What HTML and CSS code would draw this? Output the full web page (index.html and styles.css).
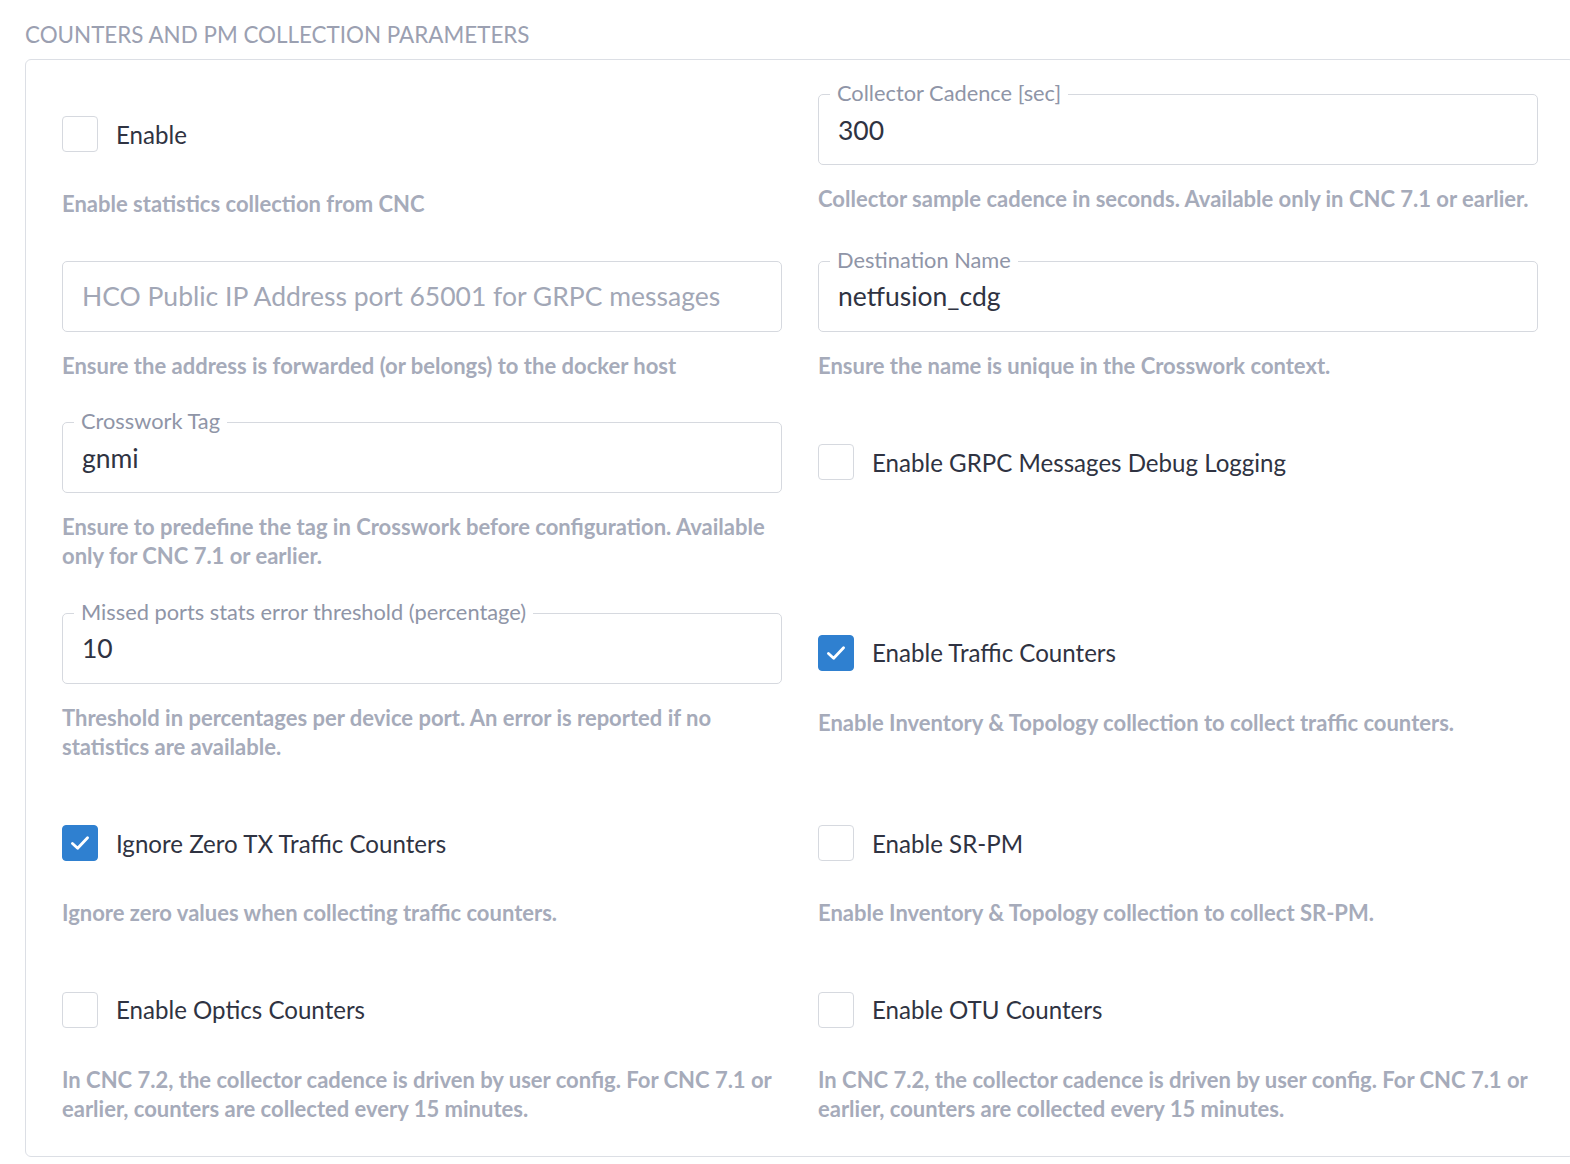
FILE: index.html
```html
<!DOCTYPE html>
<html lang="en">
<head>
  <meta charset="UTF-8" />
  <title>Counters and PM Collection Parameters</title>
  <link rel="stylesheet" href="styles.css">
</head>
<body>
  <h2 class="section-title">COUNTERS AND PM COLLECTION PARAMETERS</h2>

  <div class="panel">
    <div class="form-grid">

      <div class="field">
        <label class="check"><span class="box"></span><span>Enable</span></label>
        <p class="hint">Enable statistics collection from CNC</p>
      </div>
      <div class="field">
        <div class="outlined">
          <span class="float-label">Collector Cadence [sec]</span>
          <input type="text" value="300" />
        </div>
        <p class="hint">Collector sample cadence in seconds. Available only in CNC 7.1 or earlier.</p>
      </div>

      <div class="field">
        <div class="outlined">
          <input type="text" placeholder="HCO Public IP Address port 65001 for GRPC messages" />
        </div>
        <p class="hint">Ensure the address is forwarded (or belongs) to the docker host</p>
      </div>
      <div class="field">
        <div class="outlined">
          <span class="float-label">Destination Name</span>
          <input type="text" value="netfusion_cdg" />
        </div>
        <p class="hint">Ensure the name is unique in the Crosswork context.</p>
      </div>

      <div class="field">
        <div class="outlined">
          <span class="float-label">Crosswork Tag</span>
          <input type="text" value="gnmi" />
        </div>
        <p class="hint">Ensure to predefine the tag in Crosswork before configuration. Available only for CNC 7.1 or earlier.</p>
      </div>
      <div class="field">
        <label class="check"><span class="box"></span><span>Enable GRPC Messages Debug Logging</span></label>
      </div>

      <div class="field">
        <div class="outlined">
          <span class="float-label">Missed ports stats error threshold (percentage)</span>
          <input type="text" value="10" />
        </div>
        <p class="hint">Threshold in percentages per device port. An error is reported if no statistics are available.</p>
      </div>
      <div class="field">
        <label class="check">
          <span class="box on"><svg viewBox="0 0 36 36" width="36" height="36"><path d="M10 18.5l5.5 5L26 12.5" fill="none" stroke="#fff" stroke-width="3" stroke-linecap="round" stroke-linejoin="round"/></svg></span>
          <span>Enable Traffic Counters</span>
        </label>
        <p class="hint">Enable Inventory &amp; Topology collection to collect traffic counters.</p>
      </div>

      <div class="field">
        <label class="check">
          <span class="box on"><svg viewBox="0 0 36 36" width="36" height="36"><path d="M10 18.5l5.5 5L26 12.5" fill="none" stroke="#fff" stroke-width="3" stroke-linecap="round" stroke-linejoin="round"/></svg></span>
          <span>Ignore Zero TX Traffic Counters</span>
        </label>
        <p class="hint">Ignore zero values when collecting traffic counters.</p>
      </div>
      <div class="field">
        <label class="check"><span class="box"></span><span>Enable SR-PM</span></label>
        <p class="hint">Enable Inventory &amp; Topology collection to collect SR-PM.</p>
      </div>

      <div class="field">
        <label class="check"><span class="box"></span><span>Enable Optics Counters</span></label>
        <p class="hint">In CNC 7.2, the collector cadence is driven by user config. For CNC 7.1 or earlier, counters are collected every 15 minutes.</p>
      </div>
      <div class="field">
        <label class="check"><span class="box"></span><span>Enable OTU Counters</span></label>
        <p class="hint">In CNC 7.2, the collector cadence is driven by user config. For CNC 7.1 or earlier, counters are collected every 15 minutes.</p>
      </div>

    </div>
  </div>
</body>
</html>
```

FILE: styles.css
```css
html, body { overflow: hidden; }
body { margin: 0; padding: 0 0 0 25px; font-family: Lato, "Open Sans", sans-serif; background: #fff; color: #2f3342; }

.section-title { margin: 0; height: 59px; box-sizing: border-box; padding-top: 22px; font-size: 22.4px; line-height: 26px; font-weight: 400; color: #9ba0b1; }

.panel { width: 1550px; box-sizing: border-box; border: 1px solid #dcdfe5; border-radius: 6px; padding: 34px 36px 33px; }
.form-grid { display: grid; grid-template-columns: 1fr 1fr; column-gap: 36px; row-gap: 42.5px; align-items: start; }
.field { display: flex; flex-direction: column; }

/* checkbox + label */
.check { display: flex; align-items: center; gap: 18px; height: 36px; margin: 22px 0 18px; font-size: 24.1px; cursor: pointer; }
.box { flex: none; width: 36px; height: 36px; box-sizing: border-box; border: 1px solid #d6d9df; border-radius: 4px; background: #fff; display: flex; align-items: center; justify-content: center; }
.box.on { background: #2f80d0; border-color: #2f80d0; }
.box svg { display: block; }

/* outlined text field with notched label */
.outlined { position: relative; height: 71px; box-sizing: border-box; border: 1px solid #d6d9df; border-radius: 5px; }
.outlined input { width: 100%; height: 100%; box-sizing: border-box; border: 0; outline: none; background: transparent; padding: 0 19px; font-family: Lato, "Open Sans", sans-serif; font-size: 26.5px; color: #2f3342; }
.outlined input::placeholder { color: #a2a7b6; }
.float-label { position: absolute; left: 11px; top: -15px; padding: 0 7px; background: #fff; font-size: 21.8px; line-height: 26px; color: #8f95a7; }

.hint { margin: 19px 0 0; font-size: 22px; line-height: 29px; font-weight: 700; color: #a6abba; }
```
